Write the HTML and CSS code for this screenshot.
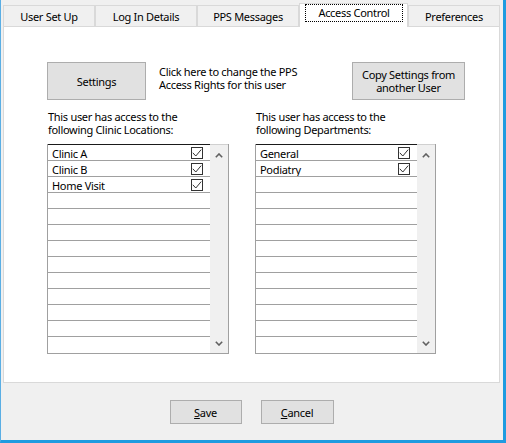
FILE: index.html
```html
<!DOCTYPE html>
<html>
<head>
<meta charset="utf-8">
<link rel="stylesheet" href="styles.css">
</head>
<body>
<div class="window">
  <div class="tabs">
    <div class="tab t1">User Set Up</div>
    <div class="tab t2">Log In Details</div>
    <div class="tab t3">PPS Messages</div>
    <div class="tab active"><span class="focus">Access Control</span></div>
    <div class="tab t5">Preferences</div>
  </div>
  <div class="panel">
    <div class="top-row">
      <div class="btn settings">Settings</div>
      <div class="desc"><div class="ln">Click here to change the PPS</div><div class="ln">Access Rights for this user</div></div>
      <div class="btn copy"><div><div class="ln">Copy Settings from</div><div class="ln">another User</div></div></div>
    </div>
    <div class="lists">
      <div class="col">
        <div class="label"><div class="ln">This user has access to the</div><div class="ln">following Clinic Locations:</div></div>
        <div class="listbox wide">
          <div class="rows">
            <div class="row"><span class="txt">Clinic A</span><span class="cb"><svg viewBox="0 0 10 10" width="10" height="10"><polyline points="0.8,4.8 3.8,8 9.2,1.6" fill="none" stroke="#333" stroke-width="1"/></svg></span></div>
            <div class="row"><span class="txt">Clinic B</span><span class="cb"><svg viewBox="0 0 10 10" width="10" height="10"><polyline points="0.8,4.8 3.8,8 9.2,1.6" fill="none" stroke="#333" stroke-width="1"/></svg></span></div>
            <div class="row"><span class="txt">Home Visit</span><span class="cb"><svg viewBox="0 0 10 10" width="10" height="10"><polyline points="0.8,4.8 3.8,8 9.2,1.6" fill="none" stroke="#333" stroke-width="1"/></svg></span></div>
            <div class="row"></div><div class="row"></div><div class="row"></div><div class="row"></div><div class="row"></div><div class="row"></div><div class="row"></div><div class="row"></div><div class="row"></div><div class="row last"></div>
          </div>
          <div class="scroll">
            <svg class="chev" viewBox="0 0 8 5" width="8" height="5"><polyline points="0.8,4.2 4,1 7.2,4.2" fill="none" stroke="#606060" stroke-width="1.6"/></svg>
            <svg class="chev" viewBox="0 0 8 5" width="8" height="5"><polyline points="0.8,0.8 4,4 7.2,0.8" fill="none" stroke="#606060" stroke-width="1.6"/></svg>
          </div>
        </div>
      </div>
      <div class="col">
        <div class="label"><div class="ln">This user has access to the</div><div class="ln">following Departments:</div></div>
        <div class="listbox narrow">
          <div class="rows">
            <div class="row"><span class="txt">General</span><span class="cb"><svg viewBox="0 0 10 10" width="10" height="10"><polyline points="0.8,4.8 3.8,8 9.2,1.6" fill="none" stroke="#333" stroke-width="1"/></svg></span></div>
            <div class="row"><span class="txt">Podiatry</span><span class="cb"><svg viewBox="0 0 10 10" width="10" height="10"><polyline points="0.8,4.8 3.8,8 9.2,1.6" fill="none" stroke="#333" stroke-width="1"/></svg></span></div>
            <div class="row"></div><div class="row"></div><div class="row"></div><div class="row"></div><div class="row"></div><div class="row"></div><div class="row"></div><div class="row"></div><div class="row"></div><div class="row"></div><div class="row last"></div>
          </div>
          <div class="scroll">
            <svg class="chev" viewBox="0 0 8 5" width="8" height="5"><polyline points="0.8,4.2 4,1 7.2,4.2" fill="none" stroke="#606060" stroke-width="1.6"/></svg>
            <svg class="chev" viewBox="0 0 8 5" width="8" height="5"><polyline points="0.8,0.8 4,4 7.2,0.8" fill="none" stroke="#606060" stroke-width="1.6"/></svg>
          </div>
        </div>
      </div>
    </div>
  </div>
  <div class="footer">
    <div class="btn fbtn save"><u>S</u>ave</div>
    <div class="btn fbtn cancel"><u>C</u>ancel</div>
  </div>
</div>
</body>
</html>
```
FILE: styles.css
```css
* { box-sizing: border-box; }
html, body { margin: 0; padding: 0; background: #f0f0f0; }
body {
  width: 506px; height: 443px; overflow: hidden;
  font-family: "Noto Sans", "Open Sans", sans-serif;
  font-size: 11px; letter-spacing: -0.3px; color: #000;
}
.window {
  width: 506px; height: 443px;
  border-left: 1px solid #5aaee4;
  border-right: 3px solid #1f9be0;
  border-bottom: 3px solid #1f9be0;
  padding-left: 2px;
  display: flex; flex-direction: column;
}
.tabs {
  height: 26px; display: flex; align-items: flex-end;
  position: relative; z-index: 2;
}
.tab {
  height: 21px; border: 1px solid #d9d9d9; border-bottom: none;
  background: #f0f0f0; display: flex; align-items: center; justify-content: center;
  padding-top: 1px;
}
.t1 { width: 92px; }
.t2 { width: 102px; }
.t3 { width: 102px; }
.t5 { width: 92px; }
.tab.active {
  width: 109px; height: 24px; margin-bottom: -1px; background: #fff;
  align-items: flex-start; padding: 0;
}
.focus {
  display: block; margin: 0 4px 0 5px; width: 99px; height: 18px;
  border: 1px dotted #000; text-align: center; line-height: 15px;
}
.panel {
  width: 497px; height: 357px; background: #fff; border: 1px solid #d9d9d9;
  padding: 35px 0 0 43px;
}
.top-row { display: flex; align-items: flex-start; }
.btn {
  background: #e1e1e1; border: 1px solid #adadad;
  display: flex; align-items: center; justify-content: center; text-align: center;
  line-height: 13px;
}
.ln { height: 13px; line-height: 13px; white-space: nowrap; }
.settings { width: 99px; height: 38px; }
.desc { margin-left: 13px; margin-top: 3px; width: 193px; }
.copy { width: 113px; height: 38px; }
.lists { display: flex; margin-top: 10px; }
.col { display: flex; flex-direction: column; }
.col + .col { margin-left: 26px; }
.label { padding-left: 1px; height: 26px; margin-bottom: 8px; }
.listbox {
  height: 210px; display: flex;
  border: 1px solid #a0a0a0; border-top: none;
}
.wide { width: 182px; }
.narrow { width: 181px; }
.rows { flex: 1; border-top: 1px solid #1a1a1a; background: #fff; }
.row {
  height: 16px; border-bottom: 1px solid #a0a0a0; display: flex; align-items: center;
  padding: 1px 7px 0 4px; overflow: hidden;
}
.row.last { border-bottom: none; height: 15px; }
.txt { flex: 1; line-height: 15px; margin-top: 1px; }
.cb {
  width: 12px; height: 12px; border: 1px solid #333; background: #fff;
  display: flex; align-items: center; justify-content: center;
}
.cb svg { display: block; }
.scroll {
  width: 18px; background: #f0f0f0; border-top: 1px solid #d0d0d0;
  display: flex; flex-direction: column; justify-content: space-between; align-items: center;
  padding: 8px 0 7px;
}
.chev { display: block; }
.footer {
  flex: 1; display: flex; justify-content: center; align-items: flex-start;
  padding-top: 17px; gap: 19px; padding-right: 3px;
}
.fbtn { height: 24px; }
.save { width: 72px; }
.cancel { width: 73px; }
u { text-decoration: underline; text-underline-offset: 1px; }
```
